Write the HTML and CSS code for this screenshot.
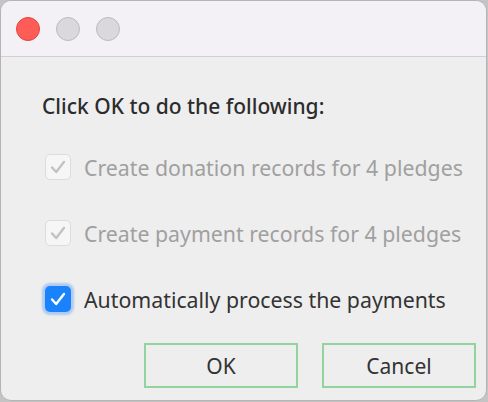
FILE: index.html
```html
<!DOCTYPE html>
<html lang="en">
<head>
    <meta charset="UTF-8">
    <title>Process Pledges</title>
    <link rel="stylesheet" href="styles.css">
</head>
<body>
    <div class="window">
        <div class="titlebar">
            <span class="dot dot-close"></span>
            <span class="dot"></span>
            <span class="dot"></span>
        </div>

        <div class="content">
            <p class="intro">Click OK to do the following:</p>

            <label class="option disabled">
                <span class="box">
                    <svg viewBox="0 0 24 24"><path d="M5.5 12.5l4.5 5 8.5-11"/></svg>
                </span>
                Create donation records for 4 pledges
            </label>

            <label class="option disabled">
                <span class="box">
                    <svg viewBox="0 0 24 24"><path d="M5.5 12.5l4.5 5 8.5-11"/></svg>
                </span>
                Create payment records for 4 pledges
            </label>

            <label class="option active">
                <span class="box">
                    <svg viewBox="0 0 24 24"><path d="M5.5 12.5l4.5 5 8.5-11"/></svg>
                </span>
                Automatically process the payments
            </label>

            <div class="buttons">
                <button class="btn">OK</button>
                <button class="btn">Cancel</button>
            </div>
        </div>
    </div>
</body>
</html>
```

FILE: styles.css
```css
* {
    margin: 0;
    padding: 0;
    box-sizing: border-box;
}

body {
    font-family: 'Noto Sans', sans-serif;
    background: #c4c4c4;
    width: 488px;
    height: 402px;
}

.window {
    width: 487px;
    height: 401px;
    background: #eeeeee;
    border: 1px solid #b4b4b4;
    border-radius: 11px;
    overflow: hidden;
}

.titlebar {
    height: 56px;
    background: #f3f1f6;
    border-bottom: 1px solid #d2d0d4;
    display: flex;
    align-items: center;
    gap: 16px;
    padding-left: 15px;
}

.dot {
    width: 24px;
    height: 24px;
    border-radius: 50%;
    background: #dad8dd;
    border: 1px solid #bdbbc0;
}

.dot-close {
    background: #fe5c57;
    border-color: #e2443e;
}

.content {
    padding: 35px 10px 0 41px;
}

.intro {
    font-size: 21px;
    font-weight: 500;
    color: #2c2c2c;
    line-height: 28px;
    margin-bottom: 34px;
}

.option {
    display: flex;
    align-items: center;
    gap: 13px;
    height: 26px;
    margin-bottom: 40px;
    padding-left: 3px;
    font-size: 21.3px;
    color: #333;
}

.option.disabled {
    color: #a0a0a0;
}

.box {
    width: 26px;
    height: 26px;
    border-radius: 5px;
    display: flex;
    align-items: center;
    justify-content: center;
}

.box svg {
    width: 22px;
    height: 22px;
    fill: none;
    stroke-width: 2.6;
    stroke-linecap: round;
    stroke-linejoin: round;
}

.disabled .box {
    background: #f6f6f6;
    border: 1px solid #dcdcdc;
}

.disabled .box svg {
    stroke: #c2c2c2;
}

.active .box {
    background: #1a82fb;
    box-shadow: 0 0 2px 3px rgba(80, 150, 250, 0.4);
}

.active .box svg {
    stroke: #fff;
}

.buttons {
    display: flex;
    justify-content: flex-end;
    gap: 24px;
    margin-top: -9px;
}

.btn {
    width: 154px;
    height: 45px;
    background: #eeeeee;
    border: 2px solid #92d3a0;
    font-family: inherit;
    font-size: 21px;
    color: #333;
}
```
